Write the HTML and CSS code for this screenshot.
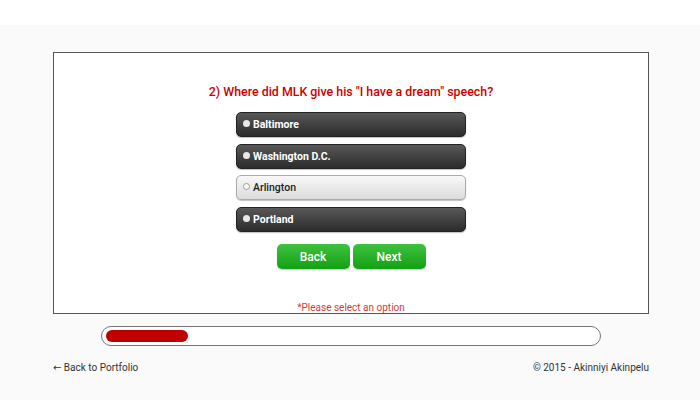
FILE: index.html
```html
<!DOCTYPE html>
<html>
<head>
<meta charset="utf-8">
<link rel="stylesheet" href="styles.css">
</head>
<body>
<div class="page">
  <div class="quiz">
    <h2 class="question">2) Where did MLK give his "I have a dream" speech?</h2>
    <ul class="options">
      <li class="option"><span class="dot"></span>Baltimore</li>
      <li class="option"><span class="dot"></span>Washington D.C.</li>
      <li class="option option-light"><span class="dot"></span>Arlington</li>
      <li class="option"><span class="dot"></span>Portland</li>
    </ul>
    <div class="actions">
      <button class="btn">Back</button>
      <button class="btn">Next</button>
    </div>
    <p class="error">*Please select an option</p>
  </div>
  <div class="progress"><div class="progress-fill" style="width:82px"></div></div>
  <div class="footer">
    <span><span class="arrow">&larr;</span> Back to Portfolio</span>
    <span>&copy; 2015 - Akinniyi Akinpelu</span>
  </div>
</div>
</body>
</html>
```
FILE: styles.css
```css
html, body {
  margin: 0;
  padding: 0;
  background: #ffffff;
  font-family: Roboto, "Liberation Sans", sans-serif;
}
.page {
  margin-top: 25px;
  height: 375px;
  box-sizing: border-box;
  background: #fafafa;
  padding-top: 27px;
}
.quiz {
  margin-left: 53px;
  width: 596px;
  height: 262px;
  box-sizing: border-box;
  border: 1px solid #555;
  background: #fff;
  display: flex;
  flex-direction: column;
  align-items: center;
  padding-top: 31px;
}
.question {
  margin: 0;
  font-size: 12.4px;
  line-height: 16px;
  font-weight: 500;
  color: #cc0000;
}
.options {
  list-style: none;
  margin: 12px 0 0;
  padding: 0;
  display: flex;
  flex-direction: column;
  gap: 6.5px;
}
.option {
  width: 230px;
  height: 25px;
  box-sizing: border-box;
  border-radius: 5px;
  background: linear-gradient(#585858, #2c2c2c);
  border: 1px solid #222;
  color: #fff;
  font-size: 10.5px;
  font-weight: bold;
  display: flex;
  align-items: center;
  padding-left: 6px;
  box-shadow: 0 1px 1px rgba(0,0,0,0.25);
}
.dot {
  width: 7px;
  height: 7px;
  border-radius: 50%;
  background: #e8e8e8;
  margin-right: 3px;
  margin-top: -2px;
}
.option-light {
  background: linear-gradient(#f8f8f8, #dcdcdc);
  border: 1px solid #aaa;
  color: #222;
  font-weight: 500;
}
.option-light .dot {
  background: #fff;
  border: 1px solid #999;
  width: 5px;
  height: 5px;
}
.actions {
  display: flex;
  gap: 3px;
  margin-top: 12.5px;
}
.btn {
  width: 73px;
  height: 25px;
  border: none;
  border-radius: 5px;
  background: linear-gradient(#3fc23f, #13a013);
  color: #fff;
  font-family: Roboto, "Liberation Sans", sans-serif;
  font-size: 12px;
  font-weight: 500;
  padding: 0;
  box-shadow: 0 1px 1px rgba(0,0,0,0.2);
}
.error {
  margin: auto 0 -2px;
  padding: 0;
  font-size: 10px;
  line-height: 14px;
  color: #d23a3a;
}
.progress {
  margin: 12px 0 0 101px;
  width: 500px;
  height: 20px;
  box-sizing: border-box;
  border: 1.5px solid #777;
  border-radius: 10px;
  padding: 2.5px 4px;
  background: #fff;
}
.progress-fill {
  height: 12px;
  border-radius: 6px;
  background: #c00000;
}
.footer {
  margin: 16px 0 0 53px;
  width: 596px;
  display: flex;
  justify-content: space-between;
  font-size: 10px;
  color: #333;
}
.arrow {
  font-family: "DejaVu Sans", sans-serif;
  font-size: 10px;
}
```
